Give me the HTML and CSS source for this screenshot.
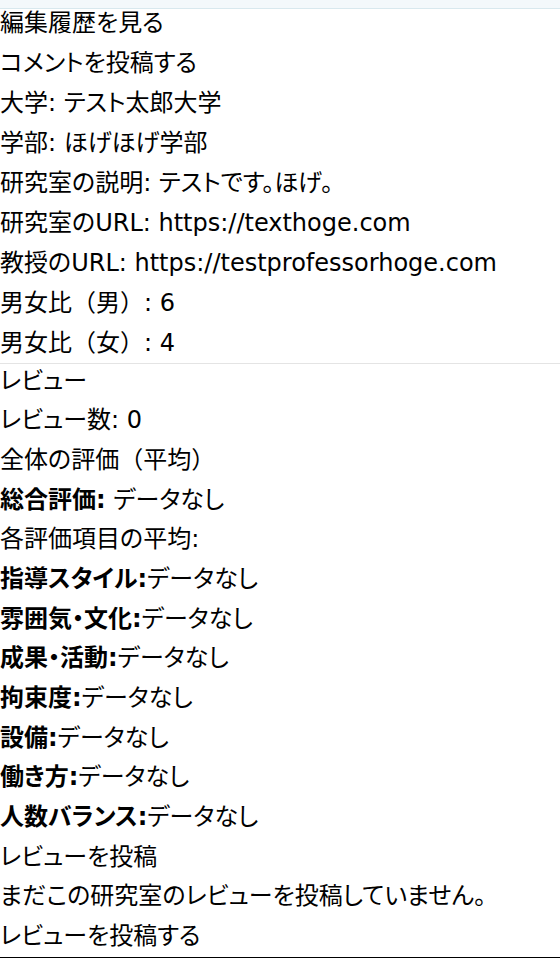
FILE: index.html
```html
<!DOCTYPE html>
<html lang="ja">
<head>
    <meta charset="UTF-8">
    <meta name="viewport" content="width=device-width, initial-scale=1.0">
    <title>研究室詳細</title>
    <link rel="stylesheet" href="styles.css">
</head>
<body>
    <div class="top-bar"></div>

    <div class="lab-info">
        <div class="line"><a href="#">編集履歴を見る</a></div>
        <div class="line"><a href="#">コメントを投稿する</a></div>
        <div class="line">大学: テスト太郎大学</div>
        <div class="line">学部: ほげほげ学部</div>
        <div class="line">研究室の説明: テストです。ほげ。</div>
        <div class="line">研究室のURL: https://texthoge.com</div>
        <div class="line">教授のURL: https://testprofessorhoge.com</div>
        <div class="line">男女比<span class="wide">（</span>男<span class="wide">）</span>: 6</div>
        <div class="line">男女比<span class="wide">（</span>女<span class="wide">）</span>: 4</div>
    </div>

    <div class="reviews">
        <div class="line">レビュー</div>
        <div class="line">レビュー数: 0</div>
        <div class="line">全体の評価<span class="wide">（</span>平均<span class="wide">）</span></div>
        <div class="line"><strong>総合評価:</strong> データなし</div>
        <div class="line">各評価項目の平均:</div>
        <div class="line"><strong>指導スタイル:</strong>データなし</div>
        <div class="line"><strong>雰囲気・文化:</strong>データなし</div>
        <div class="line"><strong>成果・活動:</strong>データなし</div>
        <div class="line"><strong>拘束度:</strong>データなし</div>
        <div class="line"><strong>設備:</strong>データなし</div>
        <div class="line"><strong>働き方:</strong>データなし</div>
        <div class="line"><strong>人数バランス:</strong>データなし</div>
        <div class="line">レビューを投稿</div>
        <div class="line">まだこの研究室のレビューを投稿していません。</div>
        <div class="line"><a href="#">レビューを投稿する</a></div>
    </div>

    <div class="footer"></div>
</body>
</html>
```

FILE: styles.css
```css
body {
    margin: 0;
    font-family: "DejaVu Sans", "Noto Sans CJK JP", sans-serif;
    font-size: 24px;
    font-feature-settings: "palt";
    color: #000;
    background: #fff;
}
.top-bar {
    height: 8px;
    background-color: #f3f8fb;
    border-bottom: 1px solid #d8e8ee;
}
.lab-info,
.reviews {
    display: flex;
    flex-direction: column;
}
.lab-info {
    gap: 11px;
    padding-bottom: 5px;
    border-bottom: 1px solid #e4e4e4;
}
.reviews {
    gap: 10.7px;
    padding-top: 2.5px;
    padding-bottom: 5.7px;
}
.line {
    line-height: 29px;
    white-space: nowrap;
}
.line a {
    color: inherit;
    text-decoration: none;
}
.line strong {
    font-weight: bold;
}
.wide {
    font-feature-settings: normal;
}
.footer {
    border-top: 1px solid #000;
}
```
